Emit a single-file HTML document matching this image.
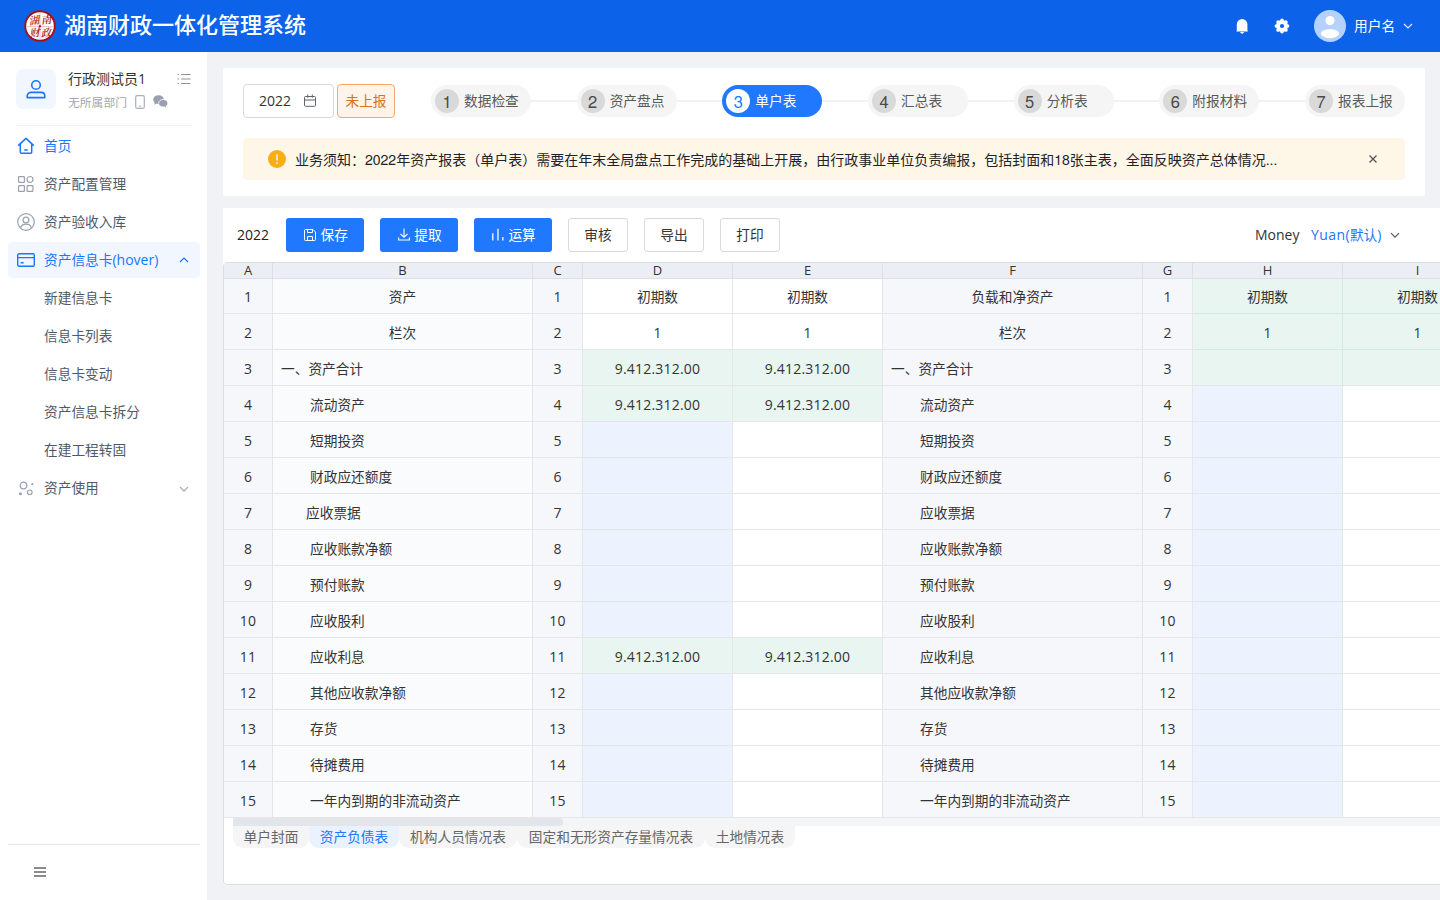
<!DOCTYPE html>
<html lang="zh-CN">
<head>
<meta charset="utf-8">
<title>湖南财政一体化管理系统</title>
<style>
*{box-sizing:border-box;margin:0;padding:0}
html,body{width:1440px;height:900px;overflow:hidden}
body{background:#f0f2f5;font-family:"Open Sans","Noto Sans","Liberation Sans","Noto Sans CJK SC",sans-serif;font-size:13.7px;color:#333;position:relative}
div,span,i{position:absolute;white-space:nowrap}
svg{position:absolute;display:block;overflow:visible}
#hdr{left:0;top:0;width:1440px;height:52px;background:#0c63ea}
#title{left:64px;top:0;height:52px;line-height:51px;font-size:22px;font-weight:500;color:#fff;font-family:"Liberation Sans","Noto Sans CJK SC",sans-serif}
#uname{left:1354px;top:0;height:52px;line-height:52px;font-size:13.7px;color:#fff}
#side{left:0;top:52px;width:207px;height:848px;background:#fff}
.mi{left:8px;width:192px;height:36px;line-height:36px;border-radius:4px;font-size:13.7px;color:#4e5969}
.mi .tx{left:36px;top:0}
.mi.on{color:#1677ff}
.mi.hv{background:#f2f6ff}
#c1{left:223px;top:68px;width:1202px;height:128px;background:#fff;border-radius:3px}
#c2{left:223px;top:208px;width:1230px;height:677px;background:#fff;border-radius:0 0 0 4px}
#tb{left:223px;top:262px;width:1300px;height:623px;border:1px solid #dcdde1;border-radius:4px}
.btn{top:218px;height:34px;line-height:34px;border-radius:3px;font-size:13.7px;text-align:center}
.btn.p{background:#2078ff;color:#fff}
.btn.d{background:#fff;border:1px solid #d9d9d9;color:#333;line-height:32px}
.step{top:85px;height:32px;width:100px;border-radius:16px;background:#f5f5f5;color:#595959;font-size:13.7px;line-height:32px}
.step i{left:4px;top:4px;width:24px;height:24px;border-radius:12px;background:#d9d9d9;color:#4a4a4a;font-style:normal;font-family:"TeX Gyre Heros","Liberation Sans",sans-serif;font-size:16.5px;line-height:25px;text-align:center}
.step span{left:33px;top:0}
.step.on{background:#2078ff;color:#fff}
.step.on i{background:#fff;color:#2078ff}
.sl{top:100px;height:2px;background:#eef1f5}
.c{height:36px;line-height:38px;font-size:13.7px;color:#333;border-right:1px solid #e6e6e8;border-bottom:1px solid #e6e6e8;overflow:hidden}
.c.ct{text-align:center}
.l{position:static;font-size:14px}
.c.n{font-size:14px;letter-spacing:.2px}
.c.g{background:#fafbfd}
.c.g2{background:#f5f7fb}
.c.gr{background:#e8f5f0}
.c.gg{border-color:#d5eae1}
.c.gb{border-right-color:#d5eae1}
.c.bl{background:#edf3fe}
.ch{top:263px;height:16px;line-height:14px;font-size:13px;color:#333;text-align:center;background:#eceef5;border-right:1px solid #dcdfe6;border-bottom:1px solid #dcdfe6}
.tab{top:826px;height:22px;line-height:22px;font-size:13.7px;color:#666;background:#f5f5f5;border-radius:0 0 10px 10px;text-align:center}
.tab.on{color:#2078ff;background:#eaf2ff}
</style>
</head>
<body>
<div id="hdr">
<svg id="logo" style="left:24px;top:10px" width="32" height="32" viewBox="0 0 32 32">
<circle cx="16" cy="16" r="14.800" fill="#fff" stroke="#a31212" stroke-width="1.900"/>
<path d="M16 2.500v27M2.500 16.600h27" stroke="#c23a3a" stroke-width=".9" opacity=".35"/>
<rect x="14.900" y="15.200" width="2" height="2" fill="#a31212"/>
<g font-family="'Noto Serif CJK SC','Liberation Serif',serif" font-weight="600" font-size="10.500" fill="#a81818" text-anchor="middle" font-style="italic">
<text x="10" y="14.200" transform="rotate(-8 10 11)">湖</text><text x="22" y="13.600" transform="rotate(-6 22 10)">南</text><text x="10.600" y="26.600" transform="rotate(-6 10 23)">财</text><text x="21.800" y="26.600" transform="rotate(-6 22 23)">政</text>
</g></svg>
<div id="title">湖南财政一体化管理系统</div>
<svg style="left:1236px;top:18px" width="12" height="17" viewBox="0 0 12 17"><path d="M.8 12.500V6.200a5.300 5.300 0 0 1 10.600 0v6.300l.6 .9H.2z" fill="#fff"/><path d="M3.800 14h4.600l-2.300 2.100z" fill="#fff"/></svg>
<svg style="left:1274px;top:18px" width="16" height="16" viewBox="0 0 16 16"><g fill="#fff"><circle cx="8" cy="8" r="5.900"/><circle cx="13.55" cy="8.00" r="1.85"/><circle cx="11.92" cy="11.92" r="1.85"/><circle cx="8.00" cy="13.55" r="1.85"/><circle cx="4.08" cy="11.92" r="1.85"/><circle cx="2.45" cy="8.00" r="1.85"/><circle cx="4.08" cy="4.08" r="1.85"/><circle cx="8.00" cy="2.45" r="1.85"/><circle cx="11.92" cy="4.08" r="1.85"/></g><circle cx="8" cy="8" r="2.100" fill="#0c63ea"/></svg>
<svg style="left:1314px;top:10px" width="32" height="32" viewBox="0 0 32 32"><circle cx="16" cy="16" r="16" fill="#b5d2ff"/><circle cx="16" cy="10.600" r="4.600" fill="#fff"/><path d="M6.800 24.200c0-3.200 4.100-5 9.200-5s9.200 1.800 9.200 5c-2.200 2.600-5.500 4-9.200 4s-7-1.400-9.200-4z" fill="#fff"/></svg>
<div id="uname">用户名</div>
<svg style="left:1403px;top:22px" width="10" height="8" viewBox="0 0 10 8"><path d="M1 2l4 4 4-4" fill="none" stroke="#fff" stroke-width="1.200" opacity=".85"/></svg>
</div>
<div id="side">
<div style="left:16px;top:17px;width:40px;height:40px;border-radius:7px;background:#f2f6ff"></div>
<svg style="left:26px;top:26px" width="20" height="22" viewBox="0 0 20 22"><circle cx="10" cy="7" r="4.300" fill="none" stroke="#1677ff" stroke-width="1.600"/><path d="M1.200 19.600v-1.600c0-2.200 1.800-3.600 4-3.600h9.600c2.200 0 4 1.400 4 3.600v1.600z" fill="none" stroke="#1677ff" stroke-width="1.600" stroke-linejoin="round"/></svg>
<div style="left:68px;top:16px;height:22px;line-height:22px;font-size:14px;color:#333">行政测试员<span class="l">1</span></div>
<div style="left:68px;top:40px;height:20px;line-height:20px;font-size:11.800px;color:#a2a7b4">无所属部门</div>
<svg style="left:135px;top:42.500px" width="10" height="14" viewBox="0 0 10 14"><rect x=".7" y=".7" width="8.600" height="12.600" rx="1.500" fill="none" stroke="#a9afbc" stroke-width="1.200"/><path d="M3.800 11.200h2.400" stroke="#a9afbc" stroke-width="1.100"/></svg>
<svg style="left:153px;top:43px" width="15" height="13" viewBox="0 0 15 13"><ellipse cx="5.500" cy="4.600" rx="5.300" ry="4.400" fill="#9aa0ad"/><path d="M1.800 7.600l-.6 2.200 2.400-1.300z" fill="#9aa0ad"/><ellipse cx="10.200" cy="8.200" rx="4.600" ry="3.800" fill="#9aa0ad" stroke="#fff" stroke-width=".8"/><path d="M12.600 10.800l.6 1.900-2.100-1.100z" fill="#9aa0ad"/></svg>
<svg style="left:177px;top:21px" width="14" height="12" viewBox="0 0 14 12"><g stroke="#8c93a1" stroke-width="1.100"><path d="M.5 1.500h1.500M4 1.500h9.500M.5 6h1.500M4 6h9.500M.5 10.500h1.500M4 10.500h9.500"/></g></svg>
<div style="left:16px;top:73px;width:176px;height:1px;background:#f0f2f4"></div>
<div class="mi on" style="top:76px"><svg style="left:9px;top:9px" width="18" height="18" viewBox="0 0 18 18"><path d="M1.200 8.600L9 1.400l7.800 7.200M3.300 7v8.200c0 .6.4 1 1 1h9.400c.6 0 1-.4 1-1V7M7.300 13h3.400" fill="none" stroke="#1677ff" stroke-width="1.500" stroke-linejoin="round"/></svg><span class="tx">首页</span></div>
<div class="mi " style="top:114px"><svg style="left:10px;top:10px" width="16" height="16" viewBox="0 0 16 16"><g fill="none" stroke="#9aa0ad" stroke-width="1.200"><rect x=".6" y=".6" width="5.800" height="5.800" rx=".6"/><circle cx="12" cy="3.500" r="3"/><rect x=".6" y="9.600" width="5.800" height="5.800" rx=".6"/><rect x="9.100" y="9.600" width="5.800" height="5.800" rx=".6"/></g></svg><span class="tx">资产配置管理</span></div>
<div class="mi " style="top:152px"><svg style="left:9px;top:9px" width="18" height="18" viewBox="0 0 18 18"><g fill="none" stroke="#9aa0ad" stroke-width="1.200"><circle cx="9" cy="9" r="8.300"/><circle cx="9" cy="7" r="2.900"/><path d="M3.600 15c.6-2.600 2.800-3.900 5.400-3.900s4.800 1.300 5.400 3.900"/></g></svg><span class="tx">资产验收入库</span></div>
<div class="mi on hv" style="top:190px"><svg style="left:9px;top:11px" width="18" height="14" viewBox="0 0 18 14"><g fill="none" stroke="#1677ff" stroke-width="1.400"><rect x=".7" y=".7" width="16.600" height="12.600" rx="1.500"/><path d="M.7 4.600h16.600M3.600 9.800h3"/></g></svg><span class="tx">资产信息卡<span class="l">(hover)</span></span><svg style="left:171px;top:14px" width="10" height="8" viewBox="0 0 10 8"><path d="M1 6l4-4 4 4" fill="none" stroke="#1677ff" stroke-width="1.200"/></svg></div>
<div class="mi " style="top:228px"><span class="tx">新建信息卡</span></div>
<div class="mi " style="top:266px"><span class="tx">信息卡列表</span></div>
<div class="mi " style="top:304px"><span class="tx">信息卡变动</span></div>
<div class="mi " style="top:342px"><span class="tx">资产信息卡拆分</span></div>
<div class="mi " style="top:380px"><span class="tx">在建工程转固</span></div>
<div class="mi " style="top:418px"><svg style="left:10px;top:10.500px" width="18" height="16" viewBox="0 0 18 16"><g fill="none" stroke="#97a1b8" stroke-width="1.200"><circle cx="5.500" cy="4.500" r="3.300"/><circle cx="11.800" cy="11.300" r="2.300"/></g><circle cx="2.400" cy="12.800" r="1.500" fill="#97a1b8"/><circle cx="14.300" cy="3.200" r="1.100" fill="#97a1b8"/></svg><span class="tx">资产使用</span><svg style="left:171px;top:14.500px" width="10" height="8" viewBox="0 0 10 8"><path d="M1 2l4 4 4-4" fill="none" stroke="#a6adbd" stroke-width="1.300"/></svg></div>
<div style="left:8px;top:792px;width:192px;height:1px;background:#e5e6eb"></div>
<svg style="left:34px;top:815px" width="12" height="10" viewBox="0 0 12 10"><path d="M0 1h12M0 5h12M0 9h12" stroke="#666" stroke-width="1.300"/></svg>
</div>
<div id="c1"></div>
<div style="left:243px;top:84px;width:91px;height:34px;border:1px solid #d9d9d9;border-radius:4px;background:#fff"></div>
<div style="left:259px;top:84px;height:34px;line-height:34px;color:#333;font-size:14px">2022</div>
<svg style="left:304px;top:94px" width="12" height="13" viewBox="0 0 12 13"><g fill="none" stroke="#5f6368" stroke-width="1"><rect x=".5" y="2.500" width="11" height="9.800" rx="1"/><path d="M.5 6h11M3.700 .5v3.200M8.300 .5v3.200"/></g></svg>
<div style="left:337px;top:84px;width:58px;height:34px;line-height:32px;border:1px solid #f7a868;border-radius:4px;background:#fff4ea;color:#d9711a;text-align:center">未上报</div>
<div class="sl" style="left:531.00px;width:45.67px"></div>
<div class="sl" style="left:676.67px;width:45.66px"></div>
<div class="sl" style="left:822.33px;width:45.67px"></div>
<div class="sl" style="left:968.00px;width:45.67px"></div>
<div class="sl" style="left:1113.67px;width:45.66px"></div>
<div class="sl" style="left:1259.33px;width:45.67px"></div>
<div class="step" style="left:431.0px"><i>1</i><span>数据检查</span></div>
<div class="step" style="left:576.67px"><i>2</i><span>资产盘点</span></div>
<div class="step on" style="left:722.33px"><i>3</i><span>单户表</span></div>
<div class="step" style="left:868.0px"><i>4</i><span>汇总表</span></div>
<div class="step" style="left:1013.67px"><i>5</i><span>分析表</span></div>
<div class="step" style="left:1159.33px"><i>6</i><span>附报材料</span></div>
<div class="step" style="left:1305.0px"><i>7</i><span>报表上报</span></div>
<div style="left:243px;top:138px;width:1162px;height:42px;border-radius:4px;background:#fef6e7"></div>
<svg style="left:268px;top:150px" width="18" height="18" viewBox="0 0 18 18"><circle cx="9" cy="9" r="9" fill="#faad14"/><path d="M9 4.300v6.300" stroke="#fff" stroke-width="1.400" stroke-linecap="butt"/><circle cx="9" cy="13.100" r=".9" fill="#fff"/></svg>
<div style="left:295px;top:138px;height:42px;line-height:42px;font-size:14px;color:#1f2329;font-family:'TeX Gyre Heros','Liberation Sans','Noto Sans CJK SC',sans-serif">业务须知：2022年资产报表（单户表）需要在年末全局盘点工作完成的基础上开展，由行政事业单位负责编报，包括封面和18张主表，全面反映资产总体情况...</div>
<svg style="left:1369px;top:155px" width="8" height="8" viewBox="0 0 8 8"><path d="M.5 .5l7 7M7.500 .5l-7 7" stroke="#505050" stroke-width="1.200"/></svg>
<div id="c2"></div>
<div id="tb"></div>
<div style="left:237px;top:218px;height:34px;line-height:34px;color:#222;font-size:14px">2022</div>
<div class="btn p" style="left:286px;width:78px"></div>
<div class="btn p" style="left:380px;width:78px"></div>
<div class="btn p" style="left:474px;width:78px"></div>
<svg style="left:304px;top:229px" width="12" height="12" viewBox="0 0 12 12"><g fill="none" stroke="#fff" stroke-width="1"><path d="M.5 1.500a1 1 0 0 1 1-1h7.500l2.500 2.500v7.500a1 1 0 0 1-1 1h-9a1 1 0 0 1-1-1z"/><path d="M3.500 .5v3h5v-3M3.500 11.500v-4h5v4"/></g></svg>
<div style="left:320.5px;top:218px;height:34px;line-height:34px;color:#fff">保存</div>
<svg style="left:398px;top:228px" width="12" height="13" viewBox="0 0 12 13"><g fill="none" stroke="#fff" stroke-width="1.100"><path d="M6 .5v8.500M2.500 5.800l3.500 3.400 3.500-3.400M.6 9.500v2.500h10.800v-2.500"/></g></svg>
<div style="left:414.2px;top:218px;height:34px;line-height:34px;color:#fff">提取</div>
<svg style="left:491px;top:228px" width="14" height="13" viewBox="0 0 14 13"><g fill="none" stroke="#fff" stroke-width="1.600" opacity=".8"><path d="M1.750 5.300v7.200M6.950 .75v11.750M11.800 9v3.500"/></g></svg>
<div style="left:508.4px;top:218px;height:34px;line-height:34px;color:#fff">运算</div>
<div class="btn d" style="left:568px;width:60px">审核</div>
<div class="btn d" style="left:644px;width:60px">导出</div>
<div class="btn d" style="left:720px;width:60px">打印</div>
<div style="left:1255px;top:218px;height:34px;line-height:34px;color:#333;font-size:14px">Money</div>
<div style="left:1311px;top:218px;height:34px;line-height:34px;color:#1677ff"><span class="l" style="letter-spacing:.4px">Yuan(</span>默认<span class="l">)</span></div>
<svg style="left:1390px;top:232px" width="10" height="7" viewBox="0 0 10 7"><path d="M1 1.200l4 4 4-4" fill="none" stroke="#555" stroke-width="1.200"/></svg>
<div class="c ct g2 n" style="left:224px;top:278px;width:49px;">1</div>
<div class="c ct g" style="left:273px;top:278px;width:260px;">资产</div>
<div class="c ct g2 n" style="left:533px;top:278px;width:50px;">1</div>
<div class="c ct" style="left:583px;top:278px;width:150px;">初期数</div>
<div class="c ct" style="left:733px;top:278px;width:150px;">初期数</div>
<div class="c ct g2" style="left:883px;top:278px;width:260px;">负载和净资产</div>
<div class="c ct g2 n" style="left:1143px;top:278px;width:50px;">1</div>
<div class="c ct gr gg" style="left:1193px;top:278px;width:150px;">初期数</div>
<div class="c ct gr gg" style="left:1343px;top:278px;width:150px;">初期数</div>
<div class="c ct g2 n" style="left:224px;top:314px;width:49px;">2</div>
<div class="c ct g" style="left:273px;top:314px;width:260px;">栏次</div>
<div class="c ct g2 n" style="left:533px;top:314px;width:50px;">2</div>
<div class="c ct n" style="left:583px;top:314px;width:150px;">1</div>
<div class="c ct n" style="left:733px;top:314px;width:150px;">1</div>
<div class="c ct g2" style="left:883px;top:314px;width:260px;">栏次</div>
<div class="c ct g2 n" style="left:1143px;top:314px;width:50px;">2</div>
<div class="c ct gr n gg" style="left:1193px;top:314px;width:150px;">1</div>
<div class="c ct gr n gg" style="left:1343px;top:314px;width:150px;">1</div>
<div class="c ct g2 n" style="left:224px;top:350px;width:49px;">3</div>
<div class="c g" style="left:273px;top:350px;width:260px;padding-left:8px">一、资产合计</div>
<div class="c ct g2 n" style="left:533px;top:350px;width:50px;">3</div>
<div class="c ct gr n" style="left:583px;top:350px;width:150px;">9.412.312.00</div>
<div class="c ct gr n" style="left:733px;top:350px;width:150px;">9.412.312.00</div>
<div class="c g2" style="left:883px;top:350px;width:260px;padding-left:8px">一、资产合计</div>
<div class="c ct g2 n" style="left:1143px;top:350px;width:50px;">3</div>
<div class="c gr gb" style="left:1193px;top:350px;width:150px;"></div>
<div class="c gr gb" style="left:1343px;top:350px;width:150px;"></div>
<div class="c ct g2 n" style="left:224px;top:386px;width:49px;">4</div>
<div class="c g" style="left:273px;top:386px;width:260px;padding-left:37px">流动资产</div>
<div class="c ct g2 n" style="left:533px;top:386px;width:50px;">4</div>
<div class="c ct gr n" style="left:583px;top:386px;width:150px;">9.412.312.00</div>
<div class="c ct gr n" style="left:733px;top:386px;width:150px;">9.412.312.00</div>
<div class="c g2" style="left:883px;top:386px;width:260px;padding-left:37px">流动资产</div>
<div class="c ct g2 n" style="left:1143px;top:386px;width:50px;">4</div>
<div class="c bl" style="left:1193px;top:386px;width:150px;"></div>
<div class="c " style="left:1343px;top:386px;width:150px;"></div>
<div class="c ct g2 n" style="left:224px;top:422px;width:49px;">5</div>
<div class="c g" style="left:273px;top:422px;width:260px;padding-left:37px">短期投资</div>
<div class="c ct g2 n" style="left:533px;top:422px;width:50px;">5</div>
<div class="c bl" style="left:583px;top:422px;width:150px;"></div>
<div class="c " style="left:733px;top:422px;width:150px;"></div>
<div class="c g2" style="left:883px;top:422px;width:260px;padding-left:37px">短期投资</div>
<div class="c ct g2 n" style="left:1143px;top:422px;width:50px;">5</div>
<div class="c bl" style="left:1193px;top:422px;width:150px;"></div>
<div class="c " style="left:1343px;top:422px;width:150px;"></div>
<div class="c ct g2 n" style="left:224px;top:458px;width:49px;">6</div>
<div class="c g" style="left:273px;top:458px;width:260px;padding-left:37px">财政应还额度</div>
<div class="c ct g2 n" style="left:533px;top:458px;width:50px;">6</div>
<div class="c bl" style="left:583px;top:458px;width:150px;"></div>
<div class="c " style="left:733px;top:458px;width:150px;"></div>
<div class="c g2" style="left:883px;top:458px;width:260px;padding-left:37px">财政应还额度</div>
<div class="c ct g2 n" style="left:1143px;top:458px;width:50px;">6</div>
<div class="c bl" style="left:1193px;top:458px;width:150px;"></div>
<div class="c " style="left:1343px;top:458px;width:150px;"></div>
<div class="c ct g2 n" style="left:224px;top:494px;width:49px;">7</div>
<div class="c g" style="left:273px;top:494px;width:260px;padding-left:33px">应收票据</div>
<div class="c ct g2 n" style="left:533px;top:494px;width:50px;">7</div>
<div class="c bl" style="left:583px;top:494px;width:150px;"></div>
<div class="c " style="left:733px;top:494px;width:150px;"></div>
<div class="c g2" style="left:883px;top:494px;width:260px;padding-left:37px">应收票据</div>
<div class="c ct g2 n" style="left:1143px;top:494px;width:50px;">7</div>
<div class="c bl" style="left:1193px;top:494px;width:150px;"></div>
<div class="c " style="left:1343px;top:494px;width:150px;"></div>
<div class="c ct g2 n" style="left:224px;top:530px;width:49px;">8</div>
<div class="c g" style="left:273px;top:530px;width:260px;padding-left:37px">应收账款净额</div>
<div class="c ct g2 n" style="left:533px;top:530px;width:50px;">8</div>
<div class="c bl" style="left:583px;top:530px;width:150px;"></div>
<div class="c " style="left:733px;top:530px;width:150px;"></div>
<div class="c g2" style="left:883px;top:530px;width:260px;padding-left:37px">应收账款净额</div>
<div class="c ct g2 n" style="left:1143px;top:530px;width:50px;">8</div>
<div class="c bl" style="left:1193px;top:530px;width:150px;"></div>
<div class="c " style="left:1343px;top:530px;width:150px;"></div>
<div class="c ct g2 n" style="left:224px;top:566px;width:49px;">9</div>
<div class="c g" style="left:273px;top:566px;width:260px;padding-left:37px">预付账款</div>
<div class="c ct g2 n" style="left:533px;top:566px;width:50px;">9</div>
<div class="c bl" style="left:583px;top:566px;width:150px;"></div>
<div class="c " style="left:733px;top:566px;width:150px;"></div>
<div class="c g2" style="left:883px;top:566px;width:260px;padding-left:37px">预付账款</div>
<div class="c ct g2 n" style="left:1143px;top:566px;width:50px;">9</div>
<div class="c bl" style="left:1193px;top:566px;width:150px;"></div>
<div class="c " style="left:1343px;top:566px;width:150px;"></div>
<div class="c ct g2 n" style="left:224px;top:602px;width:49px;">10</div>
<div class="c g" style="left:273px;top:602px;width:260px;padding-left:37px">应收股利</div>
<div class="c ct g2 n" style="left:533px;top:602px;width:50px;">10</div>
<div class="c bl" style="left:583px;top:602px;width:150px;"></div>
<div class="c " style="left:733px;top:602px;width:150px;"></div>
<div class="c g2" style="left:883px;top:602px;width:260px;padding-left:37px">应收股利</div>
<div class="c ct g2 n" style="left:1143px;top:602px;width:50px;">10</div>
<div class="c bl" style="left:1193px;top:602px;width:150px;"></div>
<div class="c " style="left:1343px;top:602px;width:150px;"></div>
<div class="c ct g2 n" style="left:224px;top:638px;width:49px;">11</div>
<div class="c g" style="left:273px;top:638px;width:260px;padding-left:37px">应收利息</div>
<div class="c ct g2 n" style="left:533px;top:638px;width:50px;">11</div>
<div class="c ct gr n" style="left:583px;top:638px;width:150px;">9.412.312.00</div>
<div class="c ct gr n" style="left:733px;top:638px;width:150px;">9.412.312.00</div>
<div class="c g2" style="left:883px;top:638px;width:260px;padding-left:37px">应收利息</div>
<div class="c ct g2 n" style="left:1143px;top:638px;width:50px;">11</div>
<div class="c bl" style="left:1193px;top:638px;width:150px;"></div>
<div class="c " style="left:1343px;top:638px;width:150px;"></div>
<div class="c ct g2 n" style="left:224px;top:674px;width:49px;">12</div>
<div class="c g" style="left:273px;top:674px;width:260px;padding-left:37px">其他应收款净额</div>
<div class="c ct g2 n" style="left:533px;top:674px;width:50px;">12</div>
<div class="c bl" style="left:583px;top:674px;width:150px;"></div>
<div class="c " style="left:733px;top:674px;width:150px;"></div>
<div class="c g2" style="left:883px;top:674px;width:260px;padding-left:37px">其他应收款净额</div>
<div class="c ct g2 n" style="left:1143px;top:674px;width:50px;">12</div>
<div class="c bl" style="left:1193px;top:674px;width:150px;"></div>
<div class="c " style="left:1343px;top:674px;width:150px;"></div>
<div class="c ct g2 n" style="left:224px;top:710px;width:49px;">13</div>
<div class="c g" style="left:273px;top:710px;width:260px;padding-left:37px">存货</div>
<div class="c ct g2 n" style="left:533px;top:710px;width:50px;">13</div>
<div class="c bl" style="left:583px;top:710px;width:150px;"></div>
<div class="c " style="left:733px;top:710px;width:150px;"></div>
<div class="c g2" style="left:883px;top:710px;width:260px;padding-left:37px">存货</div>
<div class="c ct g2 n" style="left:1143px;top:710px;width:50px;">13</div>
<div class="c bl" style="left:1193px;top:710px;width:150px;"></div>
<div class="c " style="left:1343px;top:710px;width:150px;"></div>
<div class="c ct g2 n" style="left:224px;top:746px;width:49px;">14</div>
<div class="c g" style="left:273px;top:746px;width:260px;padding-left:37px">待摊费用</div>
<div class="c ct g2 n" style="left:533px;top:746px;width:50px;">14</div>
<div class="c bl" style="left:583px;top:746px;width:150px;"></div>
<div class="c " style="left:733px;top:746px;width:150px;"></div>
<div class="c g2" style="left:883px;top:746px;width:260px;padding-left:37px">待摊费用</div>
<div class="c ct g2 n" style="left:1143px;top:746px;width:50px;">14</div>
<div class="c bl" style="left:1193px;top:746px;width:150px;"></div>
<div class="c " style="left:1343px;top:746px;width:150px;"></div>
<div class="c ct g2 n" style="left:224px;top:782px;width:49px;">15</div>
<div class="c g" style="left:273px;top:782px;width:260px;padding-left:37px">一年内到期的非流动资产</div>
<div class="c ct g2 n" style="left:533px;top:782px;width:50px;">15</div>
<div class="c bl" style="left:583px;top:782px;width:150px;"></div>
<div class="c " style="left:733px;top:782px;width:150px;"></div>
<div class="c g2" style="left:883px;top:782px;width:260px;padding-left:37px">一年内到期的非流动资产</div>
<div class="c ct g2 n" style="left:1143px;top:782px;width:50px;">15</div>
<div class="c bl" style="left:1193px;top:782px;width:150px;"></div>
<div class="c " style="left:1343px;top:782px;width:150px;"></div>
<div class="ch" style="left:224px;width:49px">A</div>
<div class="ch" style="left:273px;width:260px">B</div>
<div class="ch" style="left:533px;width:50px">C</div>
<div class="ch" style="left:583px;width:150px">D</div>
<div class="ch" style="left:733px;width:150px">E</div>
<div class="ch" style="left:883px;width:260px">F</div>
<div class="ch" style="left:1143px;width:50px">G</div>
<div class="ch" style="left:1193px;width:150px">H</div>
<div class="ch" style="left:1343px;width:150px">I</div>
<div style="left:233px;top:818px;width:1207px;height:8px;background:#f4f5f7"></div>
<div style="left:233px;top:818px;width:330px;height:8px;background:#e2e5e9;border-radius:0 4px 4px 0"></div>
<div class="tab" style="left:233px;width:76px">单户封面</div>
<div class="tab on" style="left:309px;width:90px">资产负债表</div>
<div class="tab" style="left:399px;width:118px">机构人员情况表</div>
<div class="tab" style="left:517px;width:188px">固定和无形资产存量情况表</div>
<div class="tab" style="left:705px;width:90px">土地情况表</div>
</body>
</html>
